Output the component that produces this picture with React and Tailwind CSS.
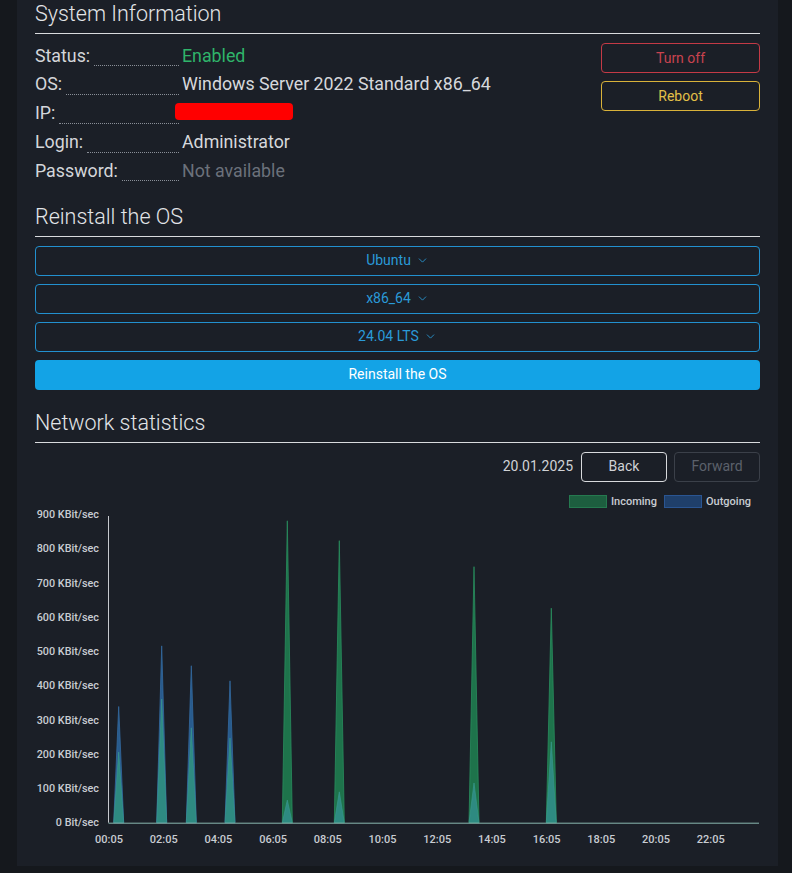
import { ChevronDown } from "lucide-react";

const info = [
  { label: "Status:", value: "Enabled", tone: "text-[#2fb46a]" },
  { label: "OS:", value: "Windows Server 2022 Standard x86_64", tone: "text-[#d6d8dc]" },
  { label: "IP:", value: null },
  { label: "Login:", value: "Administrator", tone: "text-[#d6d8dc]" },
  { label: "Password:", value: "Not available", tone: "text-[#6b717b]" },
];

const selects = ["Ubuntu", "x86_64", "24.04 LTS"];

const yTicks = [0, 100, 200, 300, 400, 500, 600, 700, 800, 900];
const xTicks = ["00:05", "02:05", "04:05", "06:05", "08:05", "10:05", "12:05", "14:05", "16:05", "18:05", "20:05", "22:05"];

// page x of the spike, incoming and outgoing in KBit/sec
const peaks = [
  { x: 118.7, inc: 206, out: 339 },
  { x: 161.7, inc: 361, out: 516 },
  { x: 191.3, inc: 277, out: 458 },
  { x: 230, inc: 247, out: 414 },
  { x: 287.3, inc: 881, out: 66 },
  { x: 339.3, inc: 823, out: 90 },
  { x: 474, inc: 747, out: 116 },
  { x: 551.3, inc: 626, out: 236 },
];

// chart svg starts at page x=35, y=482
const OX = 35;
const OY = 482;
const BASE = 822.7 - OY;
const toY = (v) => BASE - v * 0.3427;

function Heading({ children }) {
  return (
    <h2 className="border-b border-[#d9dbde] pb-[5px] text-[21.5px] font-light leading-[28px] text-[#e3e5e8]">
      {children}
    </h2>
  );
}

function tri(x, v, hw = 5) {
  const cx = x - OX;
  return `${cx - hw},${BASE} ${cx},${toY(v)} ${cx + hw},${BASE}`;
}

function Chart() {
  return (
    <svg width="725" height="384" className="block">
      {/* legend */}
      <rect x="534.5" y="13.5" width="37" height="12" fill="#1d5e3f" stroke="#25794f" />
      <text x="576" y="22.5" fontSize="11" fontWeight="500" fill="#c8ccd2">Incoming</text>
      <rect x="629.5" y="13.5" width="37" height="12" fill="#1f3f6a" stroke="#2a5592" />
      <text x="671" y="22.5" fontSize="11" fontWeight="500" fill="#c8ccd2">Outgoing</text>

      {/* y labels */}
      {yTicks.map((v) => (
        <text key={v} x="64" y={toY(v)} dy="0.35em" textAnchor="end" fontSize="10.8" fontWeight="500" fill="#c8ccd2">
          {v === 0 ? "0 Bit/sec" : `${v} KBit/sec`}
        </text>
      ))}

      {/* spikes */}
      {peaks.map((p, i) => {
        const inTop = p.inc > p.out;
        return (
          <g key={i}>
            <polygon
              points={tri(p.x, Math.max(p.inc, p.out))}
              fill={inTop ? "#1e734b" : "#285b8d"}
              stroke={inTop ? "#2a8e5e" : "#3369a0"}
              strokeWidth="0.8"
            />
            <polygon points={tri(p.x, Math.min(p.inc, p.out))} fill="#2e8a81" stroke="#3a9a90" strokeWidth="0.6" />
          </g>
        );
      })}

      {/* axes */}
      <line x1="73.5" y1="34" x2="73.5" y2={BASE} stroke="#c6c9ce" strokeWidth="1" />
      <line x1="73.5" y1={BASE + 0.5} x2="724" y2={BASE + 0.5} stroke="#8ab8b0" strokeWidth="1" />

      {/* x labels */}
      {xTicks.map((t, i) => (
        <text key={t} x={109 + 54.7 * i - OX} y={839 - OY} dy="0.35em" textAnchor="middle" fontSize="11" fontWeight="500" fill="#c8ccd2">
          {t}
        </text>
      ))}
    </svg>
  );
}

export default function App() {
  return (
    <div className="min-h-screen bg-[#15181d] font-['Roboto',sans-serif]">
      <div className="ml-[17px] w-[761px] bg-[#1b1f27] px-[18px]">
        <Heading>System Information</Heading>

        <div className="flex justify-between">
          <div className="mt-[7.5px] flex flex-col">
            {info.map((row) => (
              <div key={row.label} className="flex h-[28.75px] items-start text-[17.8px] leading-[28.75px]">
                <div className="flex h-full w-[147px] items-end">
                  <span className="text-[#d4d6da] leading-[28.75px]">{row.label}</span>
                  <span className="mb-[4px] ml-[4px] mr-[3px] flex-1 border-b border-dotted border-[#8a8f98]" />
                </div>
                {row.value ? (
                  <span className={row.tone}>{row.value}</span>
                ) : (
                  <span className="-ml-[7px] mt-[4px] h-[17px] w-[118px] rounded-[4px] bg-[#ff0000]" />
                )}
              </div>
            ))}
          </div>

          <div className="mt-[9px] flex w-[159px] flex-col gap-[8px]">
            <button className="h-[30px] rounded-[4px] border border-[#c43a46] text-[14px] text-[#c9434f]">
              Turn off
            </button>
            <button className="h-[30px] rounded-[4px] border border-[#d9b23a] text-[14px] text-[#e3c048]">
              Reboot
            </button>
          </div>
        </div>

        <div className="mt-[17.5px]">
          <Heading>Reinstall the OS</Heading>
          <div className="mt-[9px] flex flex-col gap-[8px]">
            {selects.map((s) => (
              <button
                key={s}
                className="flex h-[30px] items-center justify-center gap-[5px] rounded-[4px] border border-[#2290cf] text-[14px] text-[#2a9ad8]"
              >
                {s}
                <ChevronDown size={13} strokeWidth={1.6} />
              </button>
            ))}
            <button className="h-[30px] rounded-[4px] bg-[#13a3e6] text-[14px] text-white">
              Reinstall the OS
            </button>
          </div>
        </div>

        <div className="mt-[19px]">
          <Heading>Network statistics</Heading>
          <div className="mt-[9px] flex items-center justify-end gap-[7px]">
            <span className="mr-[1px] text-[14px] text-[#d0d2d6]">20.01.2025</span>
            <button className="h-[30px] w-[86px] rounded-[4px] border border-[#d8dadd] text-[14px] text-[#d0d2d6]">
              Back
            </button>
            <button className="h-[30px] w-[86px] rounded-[4px] border border-[#3b4049] text-[14px] text-[#5b616b]">
              Forward
            </button>
          </div>
          <Chart />
        </div>
      </div>
    </div>
  );
}
